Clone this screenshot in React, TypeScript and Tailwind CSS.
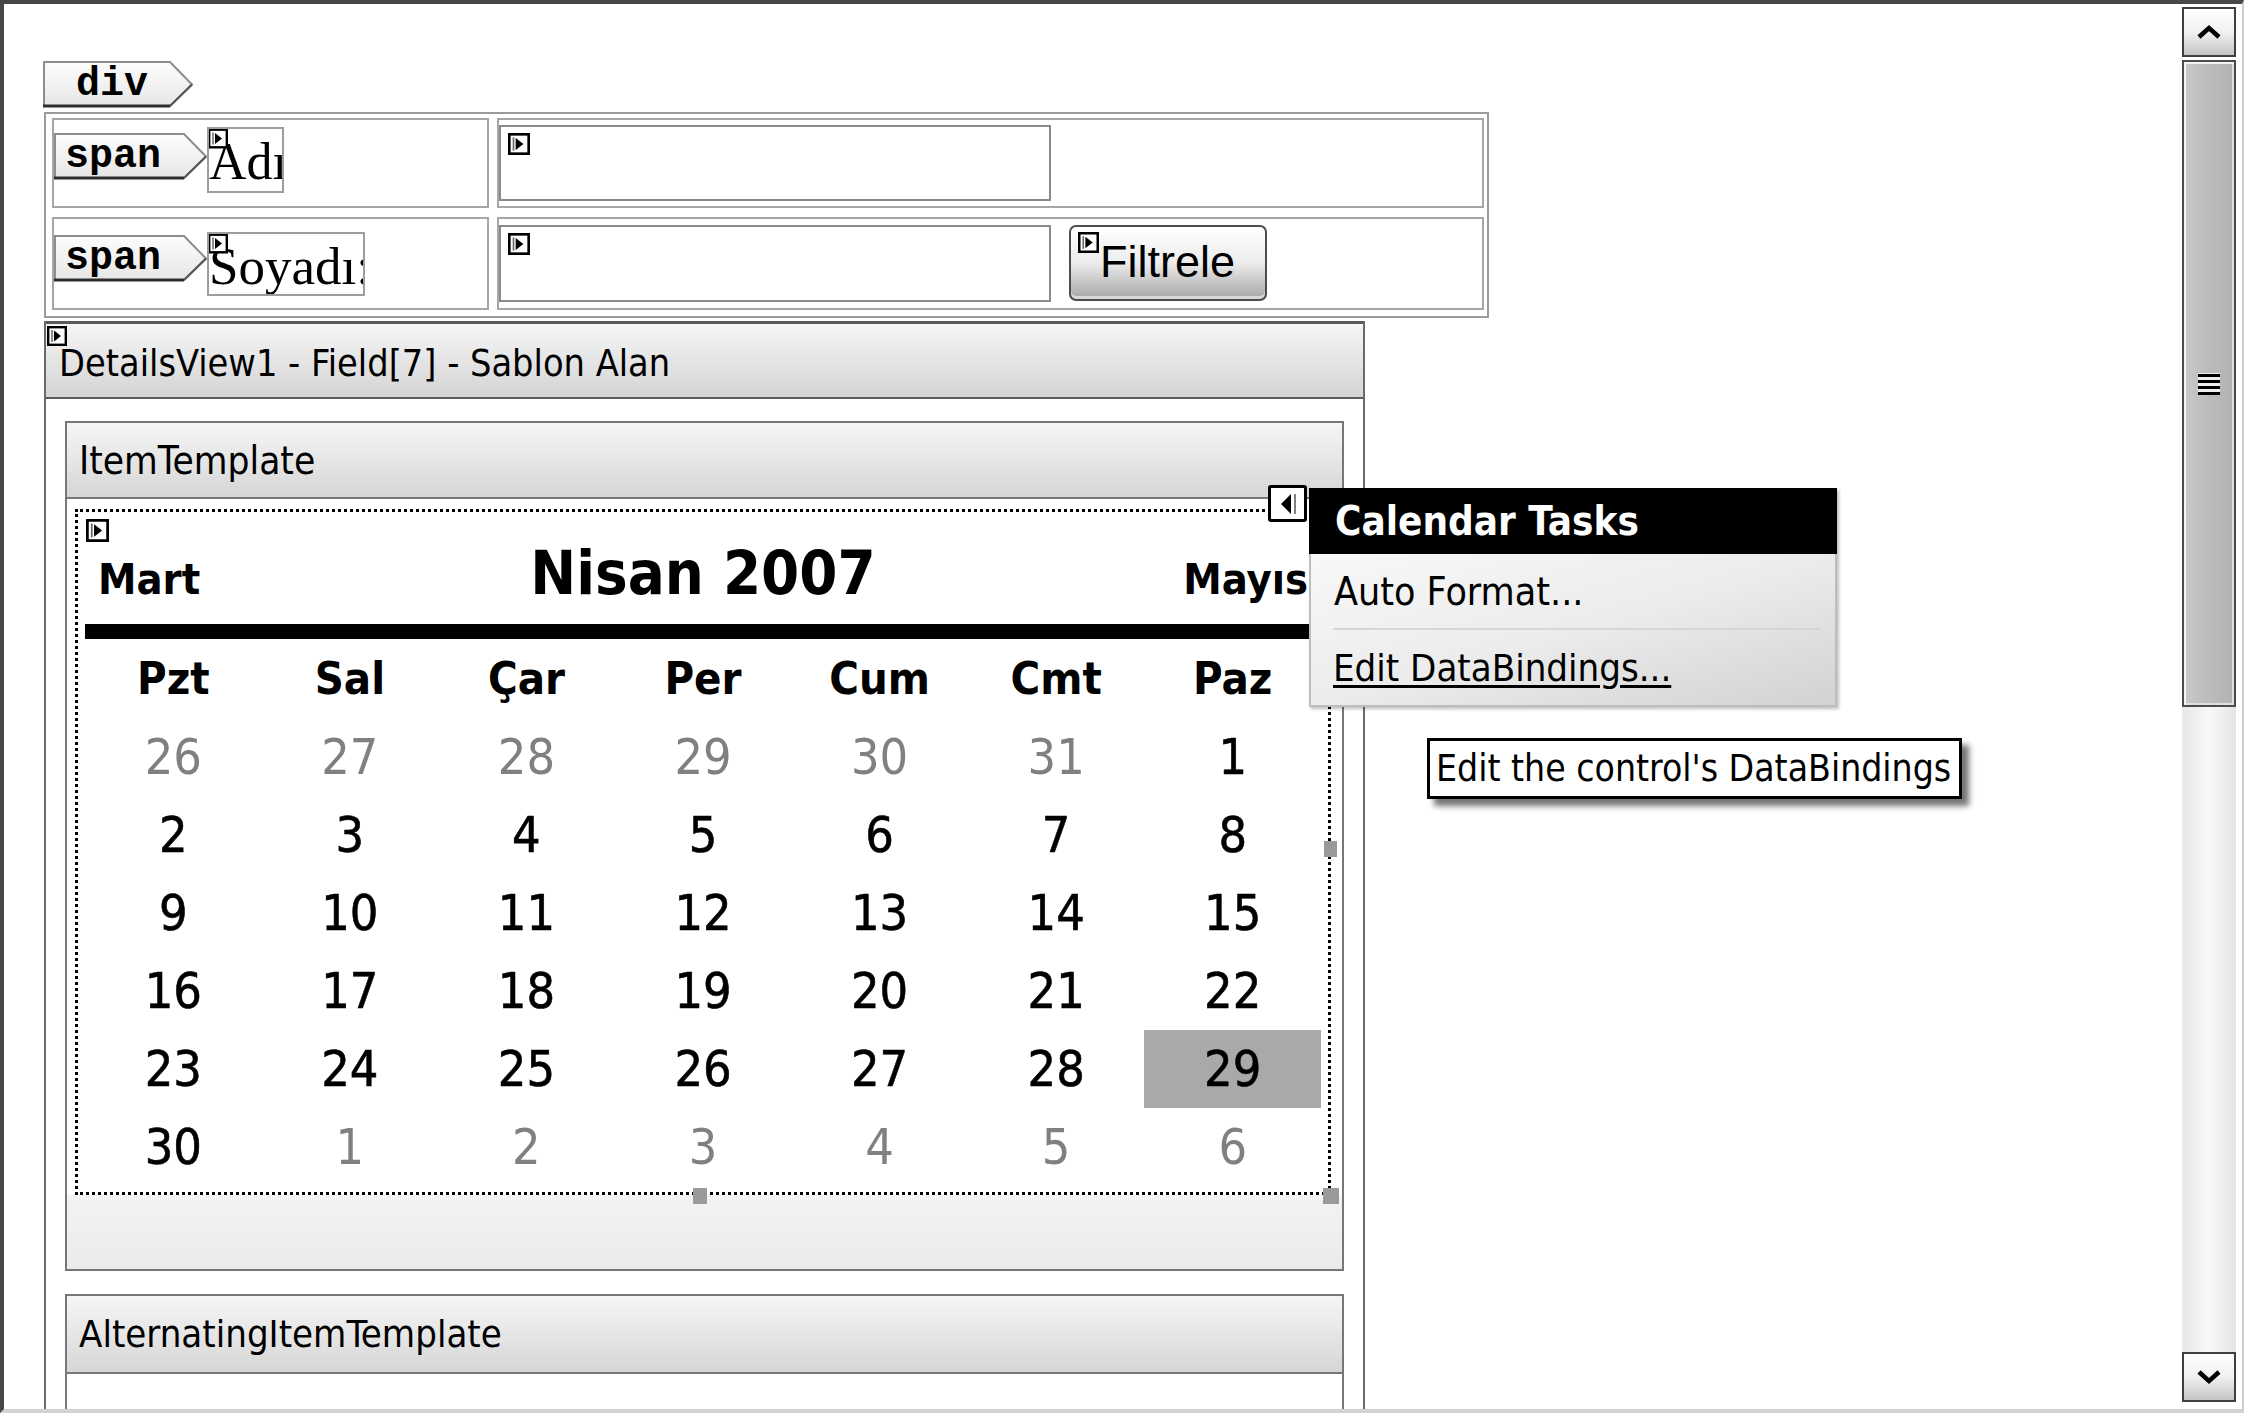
import React from "react";

const TAHOMA = "[font-family:'DejaVu_Sans_Condensed','DejaVu_Sans',sans-serif]";
const SERIF = "[font-family:'Liberation_Serif',serif]";
const MONO = "[font-family:'Liberation_Mono',monospace]";
const ARIAL = "[font-family:'Liberation_Sans',Arial,sans-serif]";

const weeks: number[][] = [
  [26, 27, 28, 29, 30, 31, 1],
  [2, 3, 4, 5, 6, 7, 8],
  [9, 10, 11, 12, 13, 14, 15],
  [16, 17, 18, 19, 20, 21, 22],
  [23, 24, 25, 26, 27, 28, 29],
  [30, 1, 2, 3, 4, 5, 6],
];
const dayNames = ["Pzt", "Sal", "Çar", "Per", "Cum", "Cmt", "Paz"];

// small "smart tag" glyph drawn by the designer on every control
function Glyph({ className }: { className: string }) {
  return (
    <svg className={className} viewBox="0 0 20 20">
      <rect x="1.2" y="1.2" width="17.6" height="17.6" fill="white" stroke="black" strokeWidth="2.4" />
      <line x1="5" y1="4" x2="5" y2="16" stroke="#666" strokeWidth="1.5" />
      <polygon points="7,4.5 14,10 7,15.5" fill="black" />
    </svg>
  );
}

// tag label with arrow tip ("div", "span")
function Tag({ label, w, className }: { label: string; w: number; className: string }) {
  const h = 47;
  const id = `tag-${label}-${w}`;
  return (
    <div className={`relative h-[47px] shrink-0 flex items-center ${className}`}>
      <svg className="absolute left-0 top-0" width={w} height={h}>
        <defs>
          <linearGradient id={id} x1="0" y1="0" x2="0" y2="1">
            <stop offset="0" stopColor="#fdfdfd" />
            <stop offset="1" stopColor="#e6e6e6" />
          </linearGradient>
        </defs>
        <polygon
          points={`1,1 ${w - 23},1 ${w - 1},${h / 2} ${w - 23},${h - 2} 1,${h - 2}`}
          fill={`url(#${id})`}
          stroke="#8d8d8d"
          strokeWidth="2"
        />
        <line x1="0" y1={h - 2} x2={w - 23} y2={h - 2} stroke="#2d2d2d" strokeWidth="3" />
        <line x1={w - 23} y1={h - 2} x2={w - 1} y2={h / 2} stroke="#555" strokeWidth="2" />
      </svg>
      <span className={`relative ${MONO} text-[40px] font-bold leading-none text-black`}>{label}</span>
    </div>
  );
}

function Scrollbar() {
  return (
    <div className="mb-[7px] mr-[6px] mt-[3px] flex w-[54px] shrink-0 flex-col">
      <div className="flex h-[50px] items-center justify-center border-2 border-[#3f3f3f] bg-linear-to-b from-white via-[#f1f1f1] to-[#c4c4c4]">
        <svg width="28" height="16" viewBox="0 0 28 16">
          <polyline points="4,13 14,4 24,13" fill="none" stroke="black" strokeWidth="4.5" />
        </svg>
      </div>
      <div className="mt-[3px] flex h-[647px] items-center justify-center border-2 border-[#4b4b4b] bg-linear-to-r from-[#c9c9c9] via-[#bcbcbc] to-[#b1b1b1] shadow-[inset_2px_2px_0_#f4f4f4,inset_-2px_-2px_0_#e0e0e0]">
        <svg width="26" height="26" viewBox="0 0 26 26">
          <rect x="2" y="2" width="22" height="22" fill="#eeeeee" />
          <rect x="2" y="3" width="22" height="3" fill="black" />
          <rect x="2" y="9" width="22" height="3" fill="black" />
          <rect x="2" y="15" width="22" height="3" fill="black" />
          <rect x="2" y="21" width="22" height="3" fill="black" />
        </svg>
      </div>
      <div className="flex-1 bg-linear-to-r from-[#e7e7e7] via-[#f9f9f9] to-[#e5e5e5]" />
      <div className="flex h-[50px] items-center justify-center border-2 border-[#3f3f3f] bg-linear-to-b from-white via-[#f1f1f1] to-[#c4c4c4]">
        <svg width="28" height="16" viewBox="0 0 28 16">
          <polyline points="4,3 14,12 24,3" fill="none" stroke="black" strokeWidth="4.5" />
        </svg>
      </div>
    </div>
  );
}

function Calendar() {
  return (
    <div className={`relative h-[686px] w-[1256px] border-[3px] border-dotted border-black bg-white ${TAHOMA}`}>
      <div className="pl-[8px] pt-[7px]">
        <Glyph className="h-[23px] w-[23px]" />
      </div>
      <div className="mx-[7px] grid h-[82px] grid-cols-[1fr_auto_1fr] items-baseline px-[13px] pt-0">
        <span className="text-[43px] font-bold leading-none">Mart</span>
        <span className="text-[61px] font-bold leading-none">Nisan 2007</span>
        <span className="text-right text-[43px] font-bold leading-none">Mayıs</span>
      </div>
      <div className="mx-[7px] h-[15px] bg-black" />
      <div className="mx-[7px] grid h-[79px] grid-cols-7 items-center text-center">
        {dayNames.map((d) => (
          <span key={d} className="text-[45px] font-bold leading-none">
            {d}
          </span>
        ))}
      </div>
      {weeks.map((week, wi) => (
        <div key={wi} className="mx-[7px] grid h-[78px] grid-cols-7 text-center">
          {week.map((d, di) => {
            const other = (wi === 0 && di < 6) || (wi === 5 && di > 0);
            const selected = wi === 4 && di === 6;
            return (
              <div
                key={di}
                className={`flex items-center justify-center text-[50px] leading-none ${
                  other ? "text-[#808080]" : "text-black [-webkit-text-stroke:0.6px_black]"
                } ${selected ? "bg-[#a9a9a9]" : ""}`}
              >
                {d}
              </div>
            );
          })}
        </div>
      ))}
      {/* resize handles */}
      <div className="absolute right-[-9px] top-[329px] h-[16px] w-[13px] bg-[#9a9a9a]" />
      <div className="absolute bottom-[-12px] left-[615px] h-[16px] w-[14px] bg-[#9a9a9a]" />
      <div className="absolute bottom-[-12px] right-[-11px] h-[16px] w-[16px] bg-[#9a9a9a]" />
    </div>
  );
}

export default function App() {
  return (
    <div className="relative h-[1413px] w-[2244px] overflow-hidden bg-white text-black">
      <div className="flex h-full border-b-4 border-l-4 border-r-2 border-t-4 border-b-[#d2d2d2] border-l-[#474747] border-r-[#cfcfcf] border-t-[#474747]">
        <div className="flex flex-1 flex-col overflow-hidden pl-[39px] pt-[57px]">
          <Tag label="div" w={150} className="w-[150px] pl-[33px]" />

          {/* table with labels and inputs */}
          <div className="ml-[1px] mt-[4px] flex w-[1445px] flex-col gap-[9px] border-2 border-[#9b9b9b] pb-[6px] pl-[6px] pr-[3px] pt-[4px]">
            <div className="flex h-[90px] gap-[8px]">
              <div className="flex w-[437px] items-start border-2 border-[#a6a6a6]">
                <Tag label="span" w={153} className="mt-[13px] w-[153px] pl-[11px]" />
                <div className={`relative mt-[7px] h-[66px] w-[77px] overflow-hidden whitespace-nowrap border-2 border-[#9d9d9d] pt-[7px] ${SERIF} text-[52px] leading-none`}>
                  Adı:
                  <Glyph className="absolute left-[-1px] top-[-1px] h-[21px] w-[20px]" />
                </div>
              </div>
              <div className="flex flex-1 items-start border-2 border-[#a6a6a6]">
                <div className="relative mt-[5px] h-[76px] w-[552px] border-2 border-[#8a8a8a] bg-white">
                  <Glyph className="absolute left-[7px] top-[6px] h-[22px] w-[22px]" />
                </div>
              </div>
            </div>
            <div className="flex h-[93px] gap-[8px]">
              <div className="flex w-[437px] items-start border-2 border-[#a6a6a6]">
                <Tag label="span" w={153} className="mt-[16px] w-[153px] pl-[11px]" />
                <div className={`relative mt-[13px] h-[64px] w-[158px] overflow-hidden whitespace-nowrap border-2 border-[#9d9d9d] pt-[6px] ${SERIF} text-[53px] leading-none`}>
                  Soyadı:
                  <Glyph className="absolute left-[-1px] top-[-1px] h-[21px] w-[20px]" />
                </div>
              </div>
              <div className="flex flex-1 items-start border-2 border-[#a6a6a6]">
                <div className="relative mt-[6px] h-[77px] w-[552px] border-2 border-[#8a8a8a] bg-white">
                  <Glyph className="absolute left-[7px] top-[6px] h-[22px] w-[22px]" />
                </div>
                <div className={`relative ml-[18px] mt-[6px] flex h-[76px] w-[198px] items-center rounded-[7px] border-2 border-[#4d4d4d] bg-linear-to-b from-white via-[#ececec] to-[#a6a6a6] pb-[4px] pl-[29px] ${ARIAL} text-[45px] leading-none shadow-[inset_0_-3px_0_#d9d9d9]`}>
                  Filtrele
                  <Glyph className="absolute left-[6px] top-[5px] h-[21px] w-[23px]" />
                </div>
              </div>
            </div>
          </div>

          {/* DetailsView */}
          <div className={`ml-[1px] mt-[3px] flex w-[1321px] flex-1 flex-col border-x-2 border-[#6a6a6a] ${TAHOMA}`}>
            <div className="relative flex h-[78px] shrink-0 items-center border-b-2 border-t-[3px] border-[#5a5a5a] bg-linear-to-b from-[#f6f6f6] to-[#d4d4d4] pl-[13px] pt-[6px] text-[37.5px] leading-none">
              DetailsView1 - Field[7] - Sablon Alan
              <Glyph className="absolute left-[1px] top-[2px] h-[20px] w-[20px]" />
            </div>
            <div className="flex flex-1 flex-col pl-[19px] pt-[22px]">
              <div className="w-[1279px] border-2 border-[#777]">
                <div className="flex h-[76px] items-center border-b-2 border-[#777] bg-linear-to-b from-[#f6f6f6] to-[#d6d6d6] pl-[12px] pt-[2px] text-[38.5px] leading-none">
                  ItemTemplate
                </div>
                <div className="px-[8px] pt-[10px]">
                  <Calendar />
                </div>
                <div className="h-[74px] bg-linear-to-b from-[#f3f3f3] to-[#ebebeb]" />
              </div>
              <div className="mt-[23px] flex w-[1279px] flex-1 flex-col border-x-2 border-t-2 border-[#777]">
                <div className="flex h-[78px] items-center border-b-2 border-[#777] bg-linear-to-b from-[#f6f6f6] to-[#d6d6d6] pl-[12px] text-[38px] leading-none">
                  AlternatingItemTemplate
                </div>
                <div className="flex-1 bg-white" />
              </div>
            </div>
          </div>
        </div>
        <Scrollbar />
      </div>

      {/* smart tag arrow of the calendar */}
      <div className="absolute left-[1268px] top-[485px] flex h-[37px] w-[39px] items-center justify-center rounded-[3px] border-[3px] border-black bg-white">
        <svg width="24" height="26" viewBox="0 0 24 26">
          <polygon points="5,13 15,3 15,23" fill="black" />
          <line x1="19" y1="3" x2="19" y2="23" stroke="#555" strokeWidth="1.5" />
        </svg>
      </div>

      {/* Calendar Tasks panel */}
      <div className={`absolute left-[1309px] top-[488px] flex w-[528px] flex-col shadow-[2px_2px_3px_rgba(0,0,0,0.25)] ${TAHOMA}`}>
        <div className="flex h-[66px] items-center bg-black pl-[26px] text-[40px] font-bold leading-none text-white">
          Calendar Tasks
        </div>
        <div className="flex h-[153px] flex-col border-x-2 border-b-2 border-[#bdbdbd] bg-linear-to-br from-[#f8f8f8] via-[#ececec] to-[#d2d2d2]">
          <div className="flex h-[74px] items-center pl-[23px] text-[39px] leading-none">Auto Format...</div>
          <div className="ml-[22px] mr-[14px] h-[2px] bg-[#d6d6d6]" />
          <div className="flex h-[75px] items-center pl-[22px] text-[38px] leading-none">
            <span className="underline decoration-[3px] underline-offset-[4px]">Edit DataBindings...</span>
          </div>
        </div>
      </div>

      {/* tooltip */}
      <div className={`absolute left-[1427px] top-[738px] flex h-[61px] w-[535px] items-center border-[3px] border-black bg-white pl-[6px] text-[37px] leading-none shadow-[7px_7px_6px_rgba(0,0,0,0.55)] ${TAHOMA}`}>
        Edit the control's DataBindings
      </div>
    </div>
  );
}
